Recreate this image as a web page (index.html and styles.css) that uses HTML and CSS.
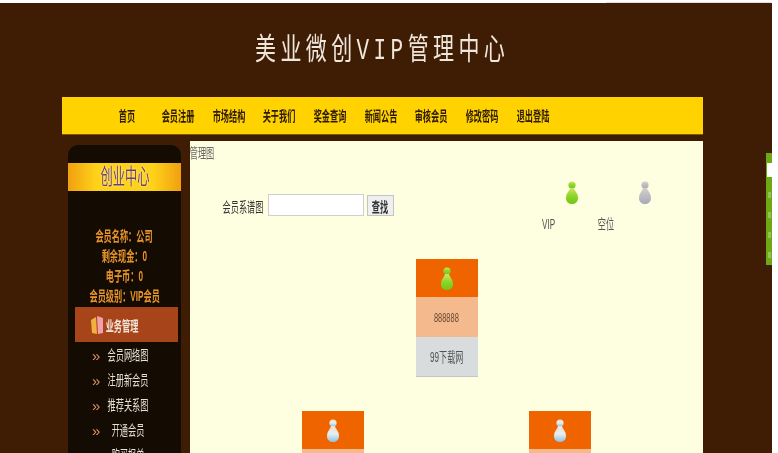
FILE: index.html
```html
<!DOCTYPE html>
<html>
<head>
    <meta charset="utf-8">
    <link rel="stylesheet" href="styles.css">
</head>
<body>
    <svg class="defs" width="0" height="0">
        <defs>
            <linearGradient id="grad-green" x1="0" y1="0" x2="0" y2="1">
                <stop offset="0" stop-color="#d8e070"/>
                <stop offset="0.45" stop-color="#8ed82a"/>
                <stop offset="1" stop-color="#74c416"/>
            </linearGradient>
            <linearGradient id="grad-gray" x1="0" y1="0" x2="0" y2="1">
                <stop offset="0" stop-color="#d4d0c8"/>
                <stop offset="1" stop-color="#a8a8bc"/>
            </linearGradient>
            <linearGradient id="grad-blue" x1="0" y1="0" x2="0" y2="1">
                <stop offset="0" stop-color="#f6e0c8"/>
                <stop offset="0.5" stop-color="#e4eef2"/>
                <stop offset="1" stop-color="#8cc0dc"/>
            </linearGradient>
            <symbol id="person" viewBox="0 0 14 24">
                <circle cx="7" cy="5" r="3.6"/>
                <path d="M5 8 C5 10 1 13 1 18 C1 22 4 24 7 24 C10 24 13 22 13 18 C13 13 9 10 9 8 Z"/>
            </symbol>
        </defs>
    </svg>
    <div class="strip"></div>
    <div class="page">
        <div class="banner"><span class="banner-text">美业微创<span class="latin">VIP</span>管理中心</span></div>
        <div class="wrap">
            <ul class="nav">
                <li><span class="squeeze">首页</span></li>
                <li><span class="squeeze">会员注册</span></li>
                <li><span class="squeeze">市场结构</span></li>
                <li><span class="squeeze">关于我们</span></li>
                <li><span class="squeeze">奖金查询</span></li>
                <li><span class="squeeze">新闻公告</span></li>
                <li><span class="squeeze">审核会员</span></li>
                <li><span class="squeeze">修改密码</span></li>
                <li><span class="squeeze">退出登陆</span></li>
            </ul>
            <div class="main">
                <div class="side">
                    <div class="side-title"><span class="squeeze">创业中心</span></div>
                    <div class="info">
                        <div><span class="squeeze">会员名称：公司</span></div>
                        <div><span class="squeeze">剩余现金：0</span></div>
                        <div><span class="squeeze">电子币：0</span></div>
                        <div><span class="squeeze">会员级别：VIP会员</span></div>
                    </div>
                    <div class="side-head">
                        <svg class="book" viewBox="0 0 14 20" width="14" height="20">
                            <path d="M1 5 L6 2 L7 19 L2 18 Z" fill="#f0b23c"/>
                            <path d="M7 1 L13 3 L13 18 L8 19 Z" fill="#f2a0b0"/>
                        </svg>
                        <span class="squeeze">业务管理</span>
                    </div>
                    <ul class="menu">
                        <li><span class="arrow">»</span><span class="squeeze">会员网络图</span></li>
                        <li><span class="arrow">»</span><span class="squeeze">注册新会员</span></li>
                        <li><span class="arrow">»</span><span class="squeeze">推荐关系图</span></li>
                        <li><span class="arrow">»</span><span class="squeeze">开通会员</span></li>
                        <li><span class="arrow">»</span><span class="squeeze">购买报单</span></li>
                    </ul>
                </div>
                <div class="content">
                    <div class="crumb"><span class="squeeze">管理图</span></div>
                    <div class="top">
                        <div class="search">
                            <label><span class="squeeze">会员系谱图</span></label>
                            <input type="text">
                            <button><span class="squeeze">查找</span></button>
                        </div>
                        <div class="legend">
                            <div class="legend-icons">
                                <svg class="person green" width="14" height="24"><use href="#person"/></svg>
                                <svg class="person gray" width="14" height="24"><use href="#person"/></svg>
                            </div>
                            <div class="legend-labels">
                                <span class="squeeze">VIP</span>
                                <span class="squeeze">空位</span>
                            </div>
                        </div>
                    </div>
                    <div class="tree">
                        <div class="node">
                            <div class="node-icon"><svg class="person green" width="14" height="24"><use href="#person"/></svg></div>
                            <div class="node-id"><span class="squeeze">888888</span></div>
                            <div class="node-name"><span class="squeeze">99下载网</span></div>
                        </div>
                        <div class="children">
                            <div class="node">
                                <div class="node-icon"><svg class="person blue" width="14" height="24"><use href="#person"/></svg></div>
                                <div class="node-id"></div>
                            </div>
                            <div class="node">
                                <div class="node-icon"><svg class="person blue" width="14" height="24"><use href="#person"/></svg></div>
                                <div class="node-id"></div>
                            </div>
                        </div>
                    </div>
                </div>
            </div>
        </div>
    </div>
    <div class="side-tab">
        <span class="tab-mark"></span>
        <span class="tab-dot"></span>
        <span class="tab-dot"></span>
        <span class="tab-dot"></span>
        <span class="tab-dot"></span>
    </div>
</body>
</html>
```

FILE: styles.css
```css
html, body {
    margin: 0;
    padding: 0;
    height: 453px;
    overflow: hidden;
    background: #fff;
}
body {
    font-family: "Liberation Sans", "Noto Sans CJK SC", sans-serif;
    font-size: 12px;
}
ul {
    list-style: none;
    margin: 0;
    padding: 0;
}
.defs {
    position: absolute;
}
/* the whole shot is squashed sideways, so the text is too */
.squeeze {
    display: inline-block;
    transform: scale(0.68, 1.18);
    white-space: nowrap;
}
.strip {
    width: 165px;
    height: 3px;
    box-sizing: border-box;
    margin-left: 606px;
    border-bottom: 1px solid #e6dcd2;
}
.page {
    width: 772px;
    height: 450px;
    background: #3f1d05;
    overflow: hidden;
    filter: blur(0.5px);
}
.banner {
    height: 94px;
    box-sizing: border-box;
    padding: 27px 0 0 255px;
    font-size: 21px;
    line-height: 38px;
    letter-spacing: 4.4px;
    color: #efe6dc;
}
.banner-text {
    display: inline-block;
    transform: scaleY(1.42);
    white-space: nowrap;
}
.latin {
    font-family: "Liberation Mono", monospace;
}
.wrap {
    width: 641px;
    margin-left: 62px;
}
.nav {
    display: flex;
    height: 38px;
    box-sizing: border-box;
    padding-left: 40px;
    background: #ffd200;
    border-bottom: 1px solid #7a5a08;
}
.nav li {
    width: 50.7px;
    text-align: center;
    font-weight: bold;
    line-height: 38px;
    color: #2c1a02;
}
.main {
    display: flex;
    margin-top: 6px;
}
.side {
    width: 113px;
    height: 320px;
    margin: 4px 0 0 6px;
    flex-shrink: 0;
    border-radius: 10px 10px 0 0;
    background: #140b02;
}
.side-title {
    height: 28px;
    margin-top: 18px;
    background: linear-gradient(to right, #f0a010, #ffd21a 25%, #ffd21a 75%, #f0a010);
    text-align: center;
    font-size: 18px;
    line-height: 28px;
    color: #6c3f66;
    text-shadow: 0 0 2px #fff;
}
.info {
    margin-top: 35px;
    text-align: center;
    font-weight: bold;
    line-height: 20px;
    color: #e8952c;
}
.side-head {
    display: flex;
    align-items: center;
    height: 35px;
    margin: 1px 3px 0 7px;
    padding-left: 15px;
    background: #a8441a;
    font-weight: bold;
    color: #f2e6da;
}
.book {
    flex-shrink: 0;
}
.side-head .squeeze {
    margin-left: -6px;
}
.menu {
    margin-top: 1px;
}
.menu li {
    position: relative;
    height: 25px;
    line-height: 25px;
    padding-left: 8px;
    text-align: center;
    color: #e6e0d6;
}
.arrow {
    position: absolute;
    left: 24px;
    font-size: 15px;
    color: #e09060;
}
.content {
    width: 513px;
    height: 312px;
    margin-left: 9px;
    background: #fefee0;
    color: #555;
}
.crumb {
    padding-top: 5px;
    line-height: 14px;
    margin-left: -6px;
    color: #666;
}
.top {
    display: flex;
    justify-content: space-between;
}
.search {
    display: flex;
    align-items: center;
    gap: 3px;
    height: 22px;
    margin: 34px 0 0 30px;
    color: #333;
}
.search label {
    display: flex;
    justify-content: center;
    width: 45px;
}
.search input {
    width: 96px;
    height: 22px;
    box-sizing: border-box;
    padding: 0;
    border: 1px solid #cfcfcf;
    background: #fff;
}
.search button {
    width: 27px;
    height: 21px;
    padding: 0;
    border: 1px solid #c4c4c4;
    background: #efefef;
    font: inherit;
    font-weight: bold;
    color: #333;
}
.legend {
    width: 168px;
    padding-top: 20px;
}
.legend-icons {
    display: flex;
    gap: 59px;
    padding-left: 30px;
}
.legend-labels {
    display: flex;
    gap: 36px;
    padding-left: 4px;
    margin-top: 13px;
    line-height: 14px;
}
.person {
    display: block;
}
.green {
    fill: url(#grad-green);
}
.gray {
    fill: url(#grad-gray);
}
.blue {
    fill: url(#grad-blue);
}
.tree {
    display: flex;
    flex-direction: column;
    align-items: center;
    margin-top: 28px;
}
.children {
    display: flex;
    gap: 165px;
    margin-top: 34px;
}
.node {
    width: 62px;
    text-align: center;
}
.node-icon {
    display: flex;
    justify-content: center;
    align-items: center;
    height: 38px;
    background: #f06400;
}
.node-id {
    height: 40px;
    line-height: 40px;
    background: #f4b98c;
    font-size: 11px;
    color: #6a4a34;
}
.node-name {
    height: 40px;
    box-sizing: border-box;
    line-height: 40px;
    background: #d8dcdc;
    border-bottom: 1px solid #c2c6c4;
    color: #555;
}
.side-tab {
    position: absolute;
    top: 153px;
    left: 766px;
    display: flex;
    flex-direction: column;
    align-items: flex-end;
    gap: 14px;
    width: 6px;
    height: 112px;
    box-sizing: border-box;
    padding-top: 10px;
    background: #6ea814;
}
.tab-mark {
    width: 5px;
    height: 14px;
    margin-bottom: 1px;
    background: #fff;
}
.tab-dot {
    width: 3px;
    height: 6px;
    margin-right: 1px;
    background: #98c05a;
}
```
